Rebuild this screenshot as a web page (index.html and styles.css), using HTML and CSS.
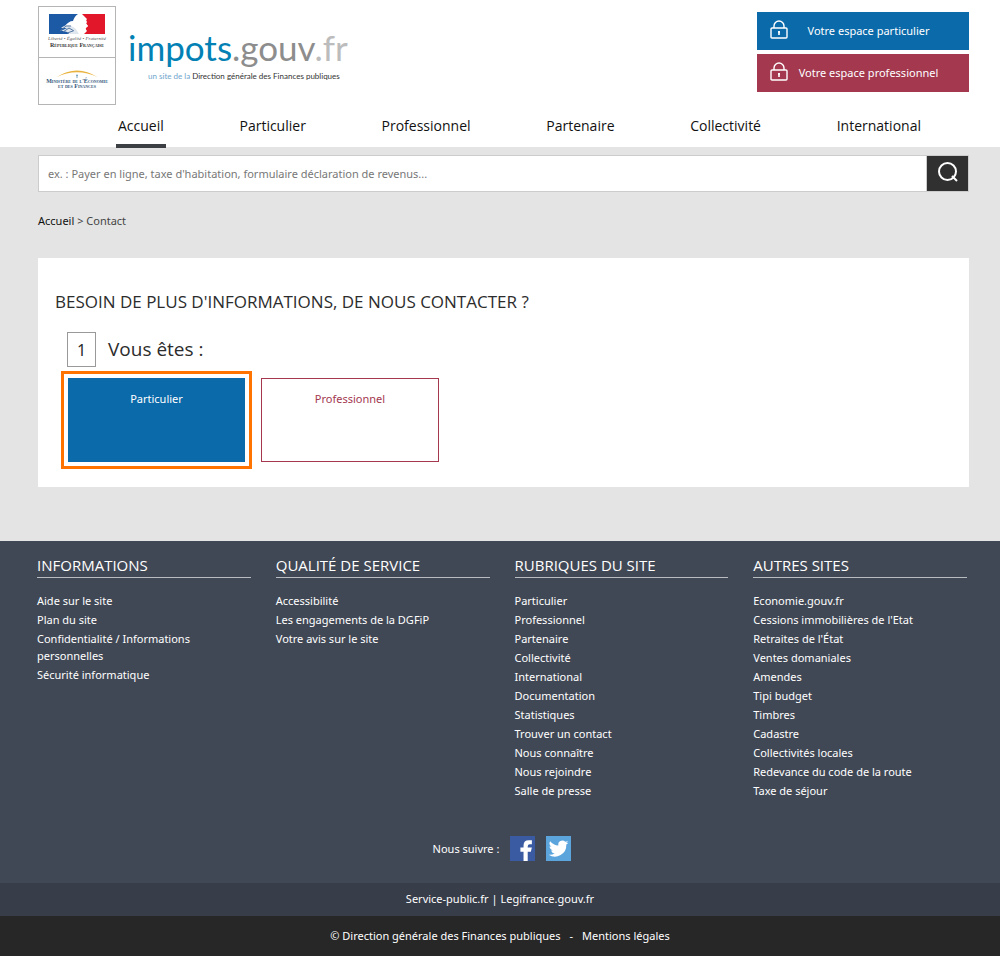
FILE: index.html
```html
<!DOCTYPE html>
<html lang="fr">
<head>
<meta charset="utf-8">
<meta name="viewport" content="width=device-width, initial-scale=1">
<title>Contact | impots.gouv.fr</title>
<link rel="stylesheet" href="styles.css">
</head>
<body>
<header class="header">
  <div class="top">
    <a class="brand" href="#">
      <span class="state">
        <span class="state-box">
          <svg class="flag" viewBox="0 0 56 21" aria-hidden="true">
            <rect width="56" height="21" fill="#fff"/>
            <path d="M0 0H29C26 2 25 4 24 7C21 7 18 9 16 12C20 12 22 14 25 17L20 20H0Z" fill="#1d5aa5"/>
            <path d="M12 14C15 11 20 10 24 13C27 14 28 17 30 20H20C18 17 15 17 12 17L18 14Z" fill="#dfe6ee"/>
            <path d="M11 17L17 12L22 12M14 18L20 14L25 17M18 19L24 17" stroke="#557aa5" stroke-width="1" fill="none"/>
            <path d="M33 0H56V20H35L38 17L36 14L39 12L36 8L38 5Z" fill="#e2182a"/>
            <path d="M30 2L36 4L38 8L37 10L39 12L37 14L36 17L31 19L28 12Z" fill="#fff"/>
          </svg>
          <span class="motto">Liberté • Égalité • Fraternité</span>
          <span class="republic">République Française</span>
        </span>
        <span class="state-box ministry-box">
          <svg class="arc" viewBox="0 0 46 10" aria-hidden="true">
            <path d="M0 8Q23 -7 46 8Q23 -3 0 8Z" fill="#e9b23c"/>
            <path d="M23 5V9M22 6H24" stroke="#6b9bb5" stroke-width="1"/>
          </svg>
          <span class="ministry">Ministère de l'Économie<br>et des Finances</span>
        </span>
      </span>
      <span class="site">
        <span class="site-name"><span class="impots">impots</span>.gouv<span class="fr">.fr</span></span>
        <span class="site-sub"><span class="sub-blue">un site de la</span> Direction générale des Finances publiques</span>
      </span>
    </a>
    <div class="spaces">
      <a class="space" href="#">
        <svg class="lock" viewBox="0 0 18 20" aria-hidden="true"><path d="M2 8H16Q17 8 17 9V17Q17 18 16 18H2Q1 18 1 17V9Q1 8 2 8ZM4 8V6A5 5 0 0 1 14 6V8" fill="none" stroke="currentColor" stroke-width="1.4"/><path d="M9 11V15M8 12H10" stroke="currentColor" stroke-width="1.6"/></svg>
        <span class="space-label">Votre espace particulier</span>
      </a>
      <a class="space space-pro" href="#">
        <svg class="lock" viewBox="0 0 18 20" aria-hidden="true"><path d="M2 8H16Q17 8 17 9V17Q17 18 16 18H2Q1 18 1 17V9Q1 8 2 8ZM4 8V6A5 5 0 0 1 14 6V8" fill="none" stroke="currentColor" stroke-width="1.4"/><path d="M9 11V15M8 12H10" stroke="currentColor" stroke-width="1.6"/></svg>
        <span class="space-label">Votre espace professionnel</span>
      </a>
    </div>
  </div>
  <nav class="nav">
    <a class="nav-link active" href="#">Accueil</a>
    <a class="nav-link" href="#">Particulier</a>
    <a class="nav-link" href="#">Professionnel</a>
    <a class="nav-link" href="#">Partenaire</a>
    <a class="nav-link" href="#">Collectivité</a>
    <a class="nav-link" href="#">International</a>
  </nav>
</header>
<main class="main">
  <form class="search">
    <input class="search-input" type="text" aria-label="Rechercher" placeholder="ex. : Payer en ligne, taxe d'habitation, formulaire déclaration de revenus...">
    <button class="search-button" type="button" aria-label="Lancer la recherche">
      <svg class="search-icon" viewBox="0 0 20 20" aria-hidden="true"><circle cx="9.500" cy="9.500" r="8.500"/><path d="M14 14L19 19"/></svg>
    </button>
  </form>
  <div class="crumbs"><a href="#">Accueil</a> &gt; <span>Contact</span></div>
  <section class="panel">
    <h1 class="title">BESOIN DE PLUS D'INFORMATIONS, DE NOUS CONTACTER ?</h1>
    <div class="step"><span class="step-number">1</span><h2 class="step-title">Vous êtes :</h2></div>
    <div class="choices">
      <button class="choice selected" type="button">Particulier</button>
      <button class="choice" type="button">Professionnel</button>
    </div>
  </section>
</main>
<footer class="footer">
  <div class="columns">
    <section>
      <h3 class="column-title">INFORMATIONS</h3>
      <ul class="links">
        <li><a href="#">Aide sur le site</a></li>
        <li><a href="#">Plan du site</a></li>
        <li><a href="#">Confidentialité / Informations<br>personnelles</a></li>
        <li><a href="#">Sécurité informatique</a></li>
      </ul>
    </section>
    <section>
      <h3 class="column-title">QUALITÉ DE SERVICE</h3>
      <ul class="links">
        <li><a href="#">Accessibilité</a></li>
        <li><a href="#">Les engagements de la DGFiP</a></li>
        <li><a href="#">Votre avis sur le site</a></li>
      </ul>
    </section>
    <section>
      <h3 class="column-title">RUBRIQUES DU SITE</h3>
      <ul class="links">
        <li><a href="#">Particulier</a></li>
        <li><a href="#">Professionnel</a></li>
        <li><a href="#">Partenaire</a></li>
        <li><a href="#">Collectivité</a></li>
        <li><a href="#">International</a></li>
        <li><a href="#">Documentation</a></li>
        <li><a href="#">Statistiques</a></li>
        <li><a href="#">Trouver un contact</a></li>
        <li><a href="#">Nous connaître</a></li>
        <li><a href="#">Nous rejoindre</a></li>
        <li><a href="#">Salle de presse</a></li>
      </ul>
    </section>
    <section>
      <h3 class="column-title">AUTRES SITES</h3>
      <ul class="links">
        <li><a href="#">Economie.gouv.fr</a></li>
        <li><a href="#">Cessions immobilières de l'Etat</a></li>
        <li><a href="#">Retraites de l'État</a></li>
        <li><a href="#">Ventes domaniales</a></li>
        <li><a href="#">Amendes</a></li>
        <li><a href="#">Tipi budget</a></li>
        <li><a href="#">Timbres</a></li>
        <li><a href="#">Cadastre</a></li>
        <li><a href="#">Collectivités locales</a></li>
        <li><a href="#">Redevance du code de la route</a></li>
        <li><a href="#">Taxe de séjour</a></li>
      </ul>
    </section>
  </div>
  <div class="follow">
    <span>Nous suivre :</span>
    <a class="social" href="#" aria-label="Facebook"><svg viewBox="0 0 24 24" aria-hidden="true"><rect width="24" height="24" fill="#3a5ba2"/><path d="M13 24V15H10V11H13V9Q13 4 18 4H21V8H19Q17 8 17 10V11H21L20 15H17V24Z" fill="#fff"/></svg></a>
    <a class="social" href="#" aria-label="Twitter"><svg viewBox="0 0 24 24" aria-hidden="true"><rect width="24" height="24" fill="#5ba4dc"/><path d="M21.500 6.200a8 8 0 0 1-2.200.6 3.900 3.900 0 0 0 1.700-2.100 8 8 0 0 1-2.500.9 3.900 3.900 0 0 0-6.600 3.600A11 11 0 0 1 4 5.100a3.900 3.900 0 0 0 1.200 5.200 4 4 0 0 1-1.800-.5c0 1.900 1.400 3.500 3.100 3.900a4 4 0 0 1-1.700.1 3.900 3.900 0 0 0 3.600 2.700A8 8 0 0 1 2.500 18a11 11 0 0 0 17-9.800 8 8 0 0 0 2-2Z" fill="#fff"/></svg></a>
  </div>
  <div class="partners"><a href="#">Service-public.fr</a> | <a href="#">Legifrance.gouv.fr</a></div>
  <div class="legal"><span>© Direction générale des Finances publiques</span><span>-</span><a href="#">Mentions légales</a></div>
</footer>
</body>
</html>
```
FILE: styles.css
```css
* { box-sizing: border-box; }
body {
  margin: 0;
  min-height: 100vh;
  display: flex;
  flex-direction: column;
  background: #e4e4e4;
  color: #2c2c2c;
  font: 11px/17px "Noto Sans", "Open Sans", sans-serif;
}
a { color: inherit; text-decoration: none; }
svg { display: block; }
h1, h2, h3 { margin: 0; font-weight: 400; }

.header { background: #fff; padding: 6px 31px 0 38px; height: 147px; }
.top { display: flex; justify-content: space-between; align-items: flex-start; }
.brand { display: flex; gap: 12px; }
.state { width: 78px; border: 1px solid #b5b5b5; }
.state-box { display: flex; flex-direction: column; align-items: center; height: 50px; padding-top: 7px; white-space: nowrap; }
.ministry-box { height: 47px; padding-top: 12px; border-top: 1px solid #b5b5b5; }
.flag { width: 56px; height: 21px; }
.motto { font: italic 5px/7px "Liberation Serif", serif; color: #555; }
.republic { font: small-caps bold 6px/7px "Liberation Serif", serif; color: #333; }
.arc { width: 46px; height: 9px; }
.ministry { font: small-caps bold 6px/5px "Liberation Serif", serif; color: #34577c; text-align: center; }
.site { display: flex; flex-direction: column; align-items: flex-start; padding-top: 21px; }
.site-name { font: 35px/41px Lato, sans-serif; color: #8d8d8d; }
.impots { color: #0381b4; }
.fr { color: #bcbcbc; }
.site-sub { align-self: flex-end; padding-right: 8px; font: 8px/16px Lato, sans-serif; color: #333; white-space: nowrap; }
.sub-blue { color: #6fa5cc; }

.spaces { display: flex; flex-direction: column; gap: 4px; width: 212px; padding-top: 6px; }
.space { display: flex; align-items: center; height: 38px; padding: 0 20px 2px 13px; background: #0b6aaa; color: #fff; }
.space-pro { background: #a3384f; }
.lock { width: 18px; height: 20px; }
.space-label { flex: 1; text-align: center; }

.nav { display: flex; justify-content: space-between; padding: 6px 46px 0 78px; font: 14px/20px "Open Sans", sans-serif; color: #111; }
.nav-link { padding: 5px 2px 8px; border-bottom: 4px solid transparent; }
.active { border-color: #3c3f43; }

.main { flex: 1; padding: 8px 31px 53px 38px; }
.search { display: flex; height: 37px; }
.search-input { flex: 1; min-width: 0; padding: 0 9px; border: 1px solid #ccc; background: #fff; color: #333; font: inherit; }
.search-input::placeholder { color: #777; opacity: 1; }
.search-button { display: grid; place-items: center; width: 42px; padding: 0 0 3px; border: 1px solid #ccc; border-left: 0; background: #303030; }
.search-icon { width: 20px; height: 20px; fill: none; stroke: #fff; stroke-width: 2; }
.crumbs { padding: 20px 0 29px; color: #444; }
.crumbs a { color: #111; }
.panel { min-height: 229px; padding: 32px 17px 24px; background: #fff; }
.title { font: 17px/24px "Open Sans", sans-serif; }
.step { display: flex; align-items: center; gap: 12px; padding: 18px 0 0 12px; }
.step-number { width: 29px; height: 35px; border: 1px solid #999; font-size: 16px; line-height: 34px; text-align: center; }
.step-title { padding-bottom: 2px; font: 19px/32px "Open Sans", sans-serif; }
.choices { display: flex; gap: 16px; padding: 11px 0 0 13px; }
.choice { display: flex; justify-content: center; width: 178px; height: 84px; padding: 11px; border: 1px solid #a3384f; background: #fff; color: #a3384f; font: inherit; }
.selected { width: 177px; border-color: #0b6aaa; background: #0b6aaa; color: #fff; outline: 3px solid #ff7300; outline-offset: 4px; }

.footer { background: #414855; color: #fff; }
.columns { display: grid; grid-template-columns: repeat(4, 1fr); gap: 25px; padding: 13px 33px 37px 37px; }
.column-title { padding-bottom: 1px; border-bottom: 1px solid #b9bdc2; font: 15px/22px "Open Sans", sans-serif; }
.links { display: grid; gap: 2px; margin: 0; padding: 14px 0 0; list-style: none; }
.follow { display: flex; justify-content: center; align-items: center; gap: 11px; padding: 0 0 22px 4px; }
.social { width: 25px; height: 25px; }
.partners { padding: 7px 8px 9px; background: #373d49; text-align: center; }
.legal { display: flex; justify-content: center; gap: 9px; padding: 11px 8px 12px; background: #272727; }
```
